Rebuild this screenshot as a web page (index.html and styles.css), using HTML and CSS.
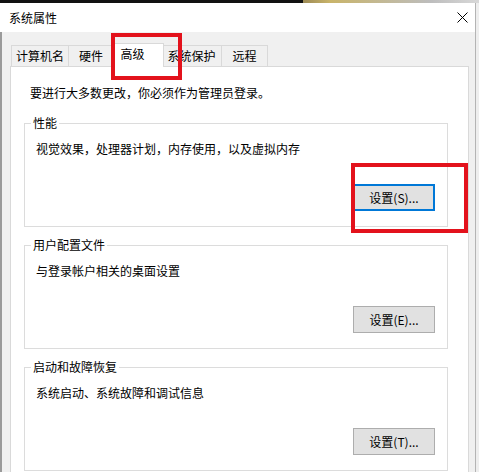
FILE: index.html
```html
<!DOCTYPE html>
<html lang="zh-CN">
<head>
<meta charset="utf-8">
<title>系统属性</title>
<link rel="stylesheet" href="styles.css">
</head>
<body>
<div class="screen">
  <div class="strip"></div>
  <div class="window">
    <div class="titlebar">
      <span class="title">系统属性</span>
      <svg class="close" width="11" height="11" viewBox="0 0 11 11"><path d="M0.5 0.5 L10.5 10.5 M10.5 0.5 L0.5 10.5" stroke="#000" stroke-width="1" fill="none"/></svg>
    </div>
    <div class="client">
      <div class="tabs">
        <div class="tab t1">计算机名</div>
        <div class="tab t2">硬件</div>
        <div class="tab t3 active">高级</div>
        <div class="tab t4">系统保护</div>
        <div class="tab t5">远程</div>
      </div>
      <div class="panel">
        <p class="intro">要进行大多数更改，你必须作为管理员登录。</p>
        <div class="group">
          <div class="legend">性能</div>
          <p class="desc">视觉效果，处理器计划，内存使用，以及虚拟内存</p>
          <div class="actions"><button class="btn focused">设置(S)...</button></div>
        </div>
        <div class="group">
          <div class="legend">用户配置文件</div>
          <p class="desc">与登录帐户相关的桌面设置</p>
          <div class="actions"><button class="btn">设置(E)...</button></div>
        </div>
        <div class="group">
          <div class="legend">启动和故障恢复</div>
          <p class="desc">系统启动、系统故障和调试信息</p>
          <div class="actions"><button class="btn">设置(T)...</button></div>
        </div>
      </div>
    </div>
    <div class="mark mark-tab"></div>
    <div class="mark mark-btn"></div>
  </div>
</div>
</body>
</html>
```

FILE: styles.css
```css
* { box-sizing: border-box; }
html, body {
  margin: 0;
  padding: 0;
  width: 479px;
  height: 472px;
  overflow: hidden;
  background: #f4f4f4;
  font-family: "Noto Sans CJK SC", "Microsoft YaHei", sans-serif;
  font-size: 12px;
  color: #000;
}
.screen {
  width: 479px;
  height: 472px;
  overflow: hidden;
  background: #eeeeee;
}
.strip {
  height: 3px;
  background: linear-gradient(to right, #111 0, #111 303px, #9c8a55 303px, #c9b46a 330px, #bdbdbd 430px, #d8d8d8 100%);
}
.window {
  position: relative;
  width: 476px;
  height: 469px;
  border-right: 1px solid #b4b4b4;
  background: #f0f0f0;
}
.titlebar {
  height: 29px;
  background: #fff;
  display: flex;
  align-items: center;
  justify-content: space-between;
  padding: 0 7px 0 9px;
}
.title { line-height: 16px; }
.close { display: block; }
.client {
  height: 440px;
  border-left: 2px solid #9a9a9a;
  padding-top: 11px;
}
.tabs {
  display: flex;
  align-items: flex-end;
  height: 23px;
  margin-left: 9px;
}
.tab {
  height: 21px;
  border: 1px solid #d9d9d9;
  border-bottom: none;
  margin-right: -1px;
  background: #f0f0f0;
  line-height: 19px;
  text-align: center;
}
.t1 { width: 58px; }
.t2 { width: 46px; }
.t3 { width: 53px; }
.t4 { width: 61px; }
.t5 { width: 47px; }
.tab.active {
  position: relative;
  z-index: 1;
  height: 24px;
  margin: 0 -3px -1px -2px;
  background: #fff;
  line-height: 20px;
  padding-right: 10px;
}
.panel {
  margin-left: 8px;
  width: 459px;
  height: 420px;
  background: #fff;
  border: 1px solid #d9d9d9;
  padding-top: 18px;
}
.intro {
  margin: 0 0 0 19px;
  line-height: 16px;
}
.group {
  margin: 22px 20px 0 13px;
  border: 1px solid #dcdcdc;
  padding: 0 12px 15px 11px;
}
.group + .group { margin-top: 18px; }
.legend {
  width: max-content;
  margin: -9px 0 0 -5px;
  padding: 0 2px;
  background: #fff;
  line-height: 16px;
}
.desc {
  margin: 10px 0 0 0;
  line-height: 16px;
}
.actions {
  display: flex;
  justify-content: flex-end;
  margin-top: 27px;
}
.btn {
  width: 82px;
  height: 27px;
  background: #e1e1e1;
  border: 1px solid #adadad;
  font-family: inherit;
  font-size: 12px;
  color: #000;
  padding: 0;
  line-height: 25px;
}
.btn.focused {
  border: 2px solid #0078d7;
  line-height: 23px;
}
.mark {
  position: absolute;
  border: 4px solid #e3121c;
  z-index: 5;
}
.mark-tab { left: 111px; top: 30px; width: 71px; height: 47px; }
.mark-btn { left: 351px; top: 160px; width: 117px; height: 70px; }
```
